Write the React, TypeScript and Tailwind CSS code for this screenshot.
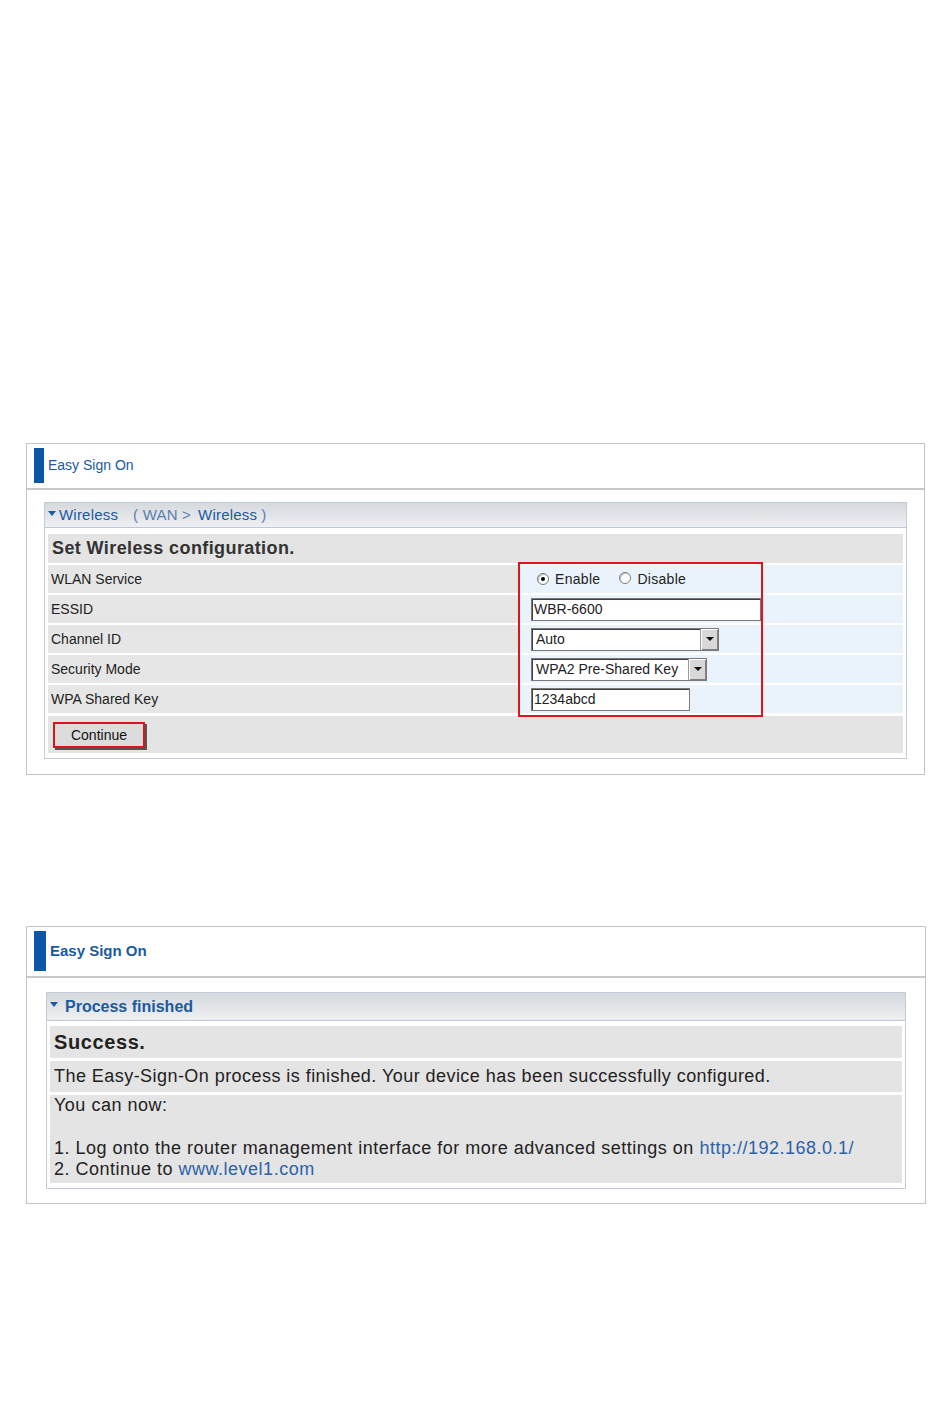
import React from "react";

const font = { fontFamily: '"Liberation Sans", Arial, sans-serif' };

function PanelHeader({ title, bold }: { title: string; bold?: boolean }) {
  return (
    <div className="flex items-stretch border-b-2 border-[#c8c8c8] pl-[7px] pt-[4px] pb-[5px]">
      <div className={`${bold ? "w-[12px] h-[40px]" : "w-[10px] h-[35px]"} bg-[#0b56a6]`} />
      <div
        className={`flex items-center pl-[4px] text-[#1a5aa0] ${
          bold ? "text-[15px] font-bold" : "text-[14px]"
        }`}
      >
        {title}
      </div>
    </div>
  );
}

function Caret() {
  return (
    <svg width="8" height="6" viewBox="0 0 8 6" className="inline-block mr-[3px] mb-[3px]">
      <path d="M0 0h8L4 5z" fill="#1a5aa0" />
    </svg>
  );
}

function DropBtn() {
  return (
    <span className="flex h-full w-[18px] items-center justify-center border-l border-[#9a9a9a] bg-[#d8d8d8] shadow-[inset_1px_1px_0_#fff,inset_-1px_-1px_0_#808080]">
      <svg width="8" height="5" viewBox="0 0 8 5">
        <path d="M0 0h8L4 4z" fill="#111" />
      </svg>
    </span>
  );
}

function Radio({ checked }: { checked?: boolean }) {
  return (
    <span className="relative inline-flex h-[12px] w-[12px] items-center justify-center rounded-full border border-[#7a7a7a] bg-white shadow-[inset_1px_1px_0_#c0c0c0]">
      {checked && <span className="h-[4px] w-[4px] rounded-full bg-black" />}
    </span>
  );
}

const rows = ["WLAN Service", "ESSID", "Channel ID", "Security Mode", "WPA Shared Key"];

export default function App() {
  return (
    <div className="min-h-[1413px] w-[950px] bg-white text-[#222]" style={font}>
      <div className="h-[443px]" />

      {/* Panel 1 */}
      <div className="ml-[26px] w-[899px] border border-[#c4c4c4] bg-white pb-[15px]">
        <PanelHeader title="Easy Sign On" />
        <div className="mx-[17px] mt-[12px] border border-[#c3ccd6] bg-white">
          <div className="flex h-[25px] items-center border-b border-[#bcc7d2] bg-gradient-to-b from-[#d6d9dd] to-[#eef0f3] pl-[3px] text-[15px] tracking-[0.2px] text-[#1a5aa0]">
            <Caret />
            <span>Wireless</span>
            <span className="ml-[15px] text-[#5a7fb0]">( WAN &gt;</span>
            <span className="ml-[7px]">Wireless</span>
            <span className="ml-[4px] text-[#5a7fb0]">)</span>
          </div>
          <div className="px-[3px] pb-[5px] pt-[6px]">
            <div className="flex h-[29px] items-center bg-[#e4e4e4] pl-[4px] text-[18px] font-bold tracking-[0.4px] text-[#333]">
              Set Wireless configuration.
            </div>
            <div className="relative">
              {rows.map((r, i) => (
                <div key={r} className="mt-[2px] flex h-[28px]">
                  <div className="flex w-[470px] items-center bg-[#e6e6e6] pl-[3px] text-[14px] text-[#222]">
                    {r}
                  </div>
                  <div className="flex flex-1 items-center bg-[#eaf3fc] pl-[13px] text-[14px]">
                    {i === 0 && (
                      <div className="flex items-center pl-[6px] tracking-[0.3px]">
                        <Radio checked />
                        <span className="ml-[6px]">Enable</span>
                        <span className="ml-[19px]"><Radio /></span>
                        <span className="ml-[6px]">Disable</span>
                      </div>
                    )}
                    {i === 1 && (
                      <div className="flex h-[23px] w-[230px] items-center border border-[#7a7a7a] bg-white pl-[2px] shadow-[inset_1px_1px_0_#404040]">
                        WBR-6600
                      </div>
                    )}
                    {i === 2 && (
                      <div className="flex h-[23px] w-[188px] items-center border border-[#7a7a7a] bg-white shadow-[inset_1px_1px_0_#404040]">
                        <span className="flex-1 pl-[4px]">Auto</span>
                        <DropBtn />
                      </div>
                    )}
                    {i === 3 && (
                      <div className="flex h-[23px] w-[176px] items-center border border-[#7a7a7a] bg-white shadow-[inset_1px_1px_0_#404040]">
                        <span className="flex-1 whitespace-nowrap pl-[4px]">WPA2 Pre-Shared Key</span>
                        <DropBtn />
                      </div>
                    )}
                    {i === 4 && (
                      <div className="flex h-[23px] w-[159px] items-center border border-[#7a7a7a] bg-white pl-[2px] shadow-[inset_1px_1px_0_#404040]">
                        1234abcd
                      </div>
                    )}
                  </div>
                </div>
              ))}
              <div className="pointer-events-none absolute left-[470px] top-[-3px] h-[155px] w-[245px] border-2 border-[#e0141c]" />
            </div>
            <div className="mt-[3px] h-[37px] bg-[#e4e4e4] pl-[5px] pt-[6px]">
              <div className="flex h-[26px] w-[92px] items-center justify-center border-2 border-[#d8141c] bg-[#dcdcdc] text-[14px] text-[#111] shadow-[2px_2px_0_#555]">
                Continue
              </div>
            </div>
          </div>
        </div>
      </div>

      <div className="h-[151px]" />

      {/* Panel 2 */}
      <div className="ml-[26px] w-[900px] border border-[#c4c4c4] bg-white pb-[14px]">
        <PanelHeader title="Easy Sign On" bold />
        <div className="mx-[19px] mt-[14px] border border-[#c3ccd6] bg-white">
          <div className="flex h-[28px] items-center border-b border-[#bcc7d2] bg-gradient-to-b from-[#d6d9dd] to-[#eef0f3] pl-[3px] text-[16px] font-bold text-[#1a5aa0]">
            <Caret />
            <span className="ml-[4px]">Process finished</span>
          </div>
          <div className="px-[3px] pb-[5px] pt-[5px]">
            <div className="flex h-[32px] items-center bg-[#e4e4e4] pl-[4px] text-[20px] font-bold tracking-[0.6px] text-[#222]">
              Success.
            </div>
            <div className="mt-[3px] flex h-[31px] items-center bg-[#e4e4e4] pl-[4px] text-[18px] tracking-[0.45px] text-[#222]">
              The Easy-Sign-On process is finished. Your device has been successfully configured.
            </div>
            <div className="mt-[3px] bg-[#e4e4e4] pb-[2px] pl-[4px] text-[18px] leading-[21.5px] tracking-[0.5px] text-[#222]">
              <div>You can now:</div>
              <div className="h-[21px]" />
              <div>
                1. Log onto the router management interface for more advanced settings on{" "}
                <span className="text-[#2a62a8]">http://192.168.0.1/</span>
              </div>
              <div>
                2. Continue to <span className="text-[#2a62a8]">www.level1.com</span>
              </div>
            </div>
          </div>
        </div>
      </div>
    </div>
  );
}
